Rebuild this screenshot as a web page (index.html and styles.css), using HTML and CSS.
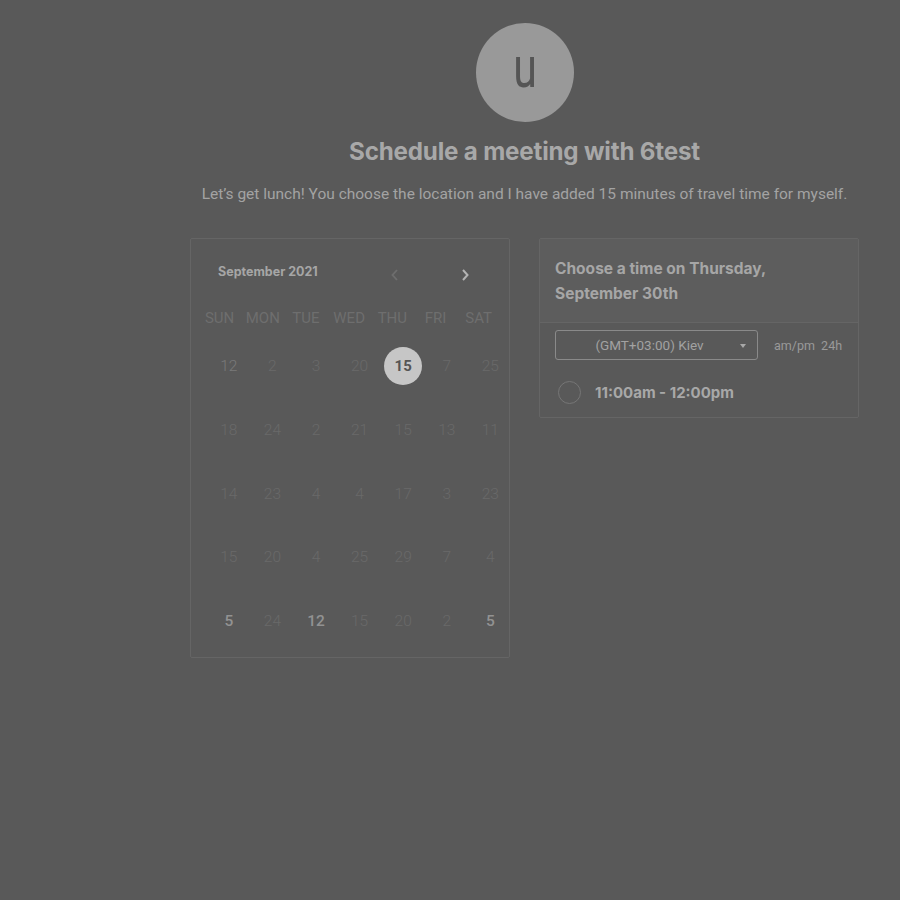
FILE: index.html
```html
<!DOCTYPE html>
<html>
<head>
<meta charset="utf-8">
<link rel="stylesheet" href="styles.css">
</head>
<body>
<div class="page">
  <div class="avatar"><span class="initial">u</span></div>
  <h1 class="title">Schedule a meeting with 6test</h1>
  <p class="subtitle">Let’s get lunch! You choose the location and I have added 15 minutes of travel time for myself.</p>
  <div class="cards">
    <div class="card cal">
      <div class="cal-head">
        <span class="month">September 2021</span>
        <span class="nav prev"><svg width="10" height="14" viewBox="0 0 10 14"><path d="M7 2 L2.5 7 L7 12" fill="none" stroke="#6e6e6e" stroke-width="1.8"/></svg></span>
        <span class="nav next"><svg width="10" height="14" viewBox="0 0 10 14"><path d="M3 2 L7.5 7 L3 12" fill="none" stroke="#b4b4b4" stroke-width="2"/></svg></span>
      </div>
      <div class="dow">
        <span>SUN</span><span>MON</span><span>TUE</span><span>WED</span><span>THU</span><span>FRI</span><span>SAT</span>
      </div>
      <div class="days">
        <span class="mid">12</span><span>2</span><span>3</span><span>20</span><span class="sel"><b>15</b></span><span>7</span><span>25</span>
        <span>18</span><span>24</span><span>2</span><span>21</span><span>15</span><span>13</span><span>11</span>
        <span>14</span><span>23</span><span>4</span><span>4</span><span>17</span><span>3</span><span>23</span>
        <span>15</span><span>20</span><span>4</span><span>25</span><span>29</span><span>7</span><span>4</span>
        <span class="on">5</span><span>24</span><span class="on">12</span><span>15</span><span>20</span><span>2</span><span class="on">5</span>
      </div>
    </div>
    <div class="card times">
      <div class="times-head">Choose a time on Thursday,<br>September 30th</div>
      <div class="times-body">
        <div class="tz-row">
          <div class="select"><span>(GMT+03:00) Kiev</span><i class="caret"></i></div>
          <div class="fmt">am/pm&nbsp;&nbsp;24h</div>
        </div>
        <div class="slot"><span class="radio"></span><span class="slot-text">11:00am - 12:00pm</span></div>
      </div>
    </div>
  </div>
</div>
</body>
</html>
```
FILE: styles.css
```css
html, body {
  margin: 0;
  padding: 0;
  background: #595959;
  height: 100%;
}
body {
  font-family: Roboto, "Liberation Sans", sans-serif;
}
.page {
  margin-left: 190px;
  width: 669px;
  display: flex;
  flex-direction: column;
  align-items: center;
  padding-top: 23px;
}
.avatar {
  width: 98px;
  height: 99px;
  border-radius: 50%;
  background: #999999;
  display: flex;
  align-items: center;
  justify-content: center;
}
.initial {
  color: #555555;
  font-family: Roboto, sans-serif;
  font-size: 58px;
  line-height: 1;
  display: block;
  transform: scaleX(0.74);
  margin-top: -12px;
}
.title {
  margin: 15px 0 0;
  font-family: Inter, sans-serif;
  font-weight: 700;
  font-size: 24.2px;
  line-height: 30px;
  color: #a8a8a8;
  letter-spacing: -0.2px;
}
.subtitle {
  margin: 17px 0 0;
  font-family: Roboto, sans-serif;
  font-size: 15.5px;
  line-height: 20px;
  color: #a3a3a3;
  white-space: nowrap;
}
.cards {
  margin-top: 34px;
  align-self: stretch;
  display: flex;
  gap: 29px;
  align-items: flex-start;
}
.card {
  width: 320px;
  box-sizing: border-box;
  border: 1px solid #656565;
  border-radius: 2px;
}
.cal {
  height: 420px;
}
.cal-head {
  display: flex;
  align-items: center;
  height: 30px;
  margin-top: 21px;
  padding-left: 27px;
}
.month {
  font-family: Inter, sans-serif;
  font-weight: 700;
  font-size: 12.5px;
  color: #a6a6a6;
  width: 171px;
  margin-top: -8px;
}
.nav {
  display: flex;
  align-items: center;
  justify-content: center;
  width: 12px;
  height: 16px;
}
.next { margin-left: 58px; }
.dow {
  display: grid;
  grid-template-columns: repeat(7, 43.2px);
  padding-left: 7px;
  margin-top: 18px;
  font-size: 15px;
  color: #6e6e6e;
  line-height: 20px;
}
.dow span { text-align: center; }
.days {
  display: grid;
  grid-template-columns: repeat(7, 43.6px);
  grid-auto-rows: 63.75px;
  padding-left: 16px;
  margin-top: 23px;
  font-size: 15.5px;
  color: #696969;
  font-weight: 300;
}
.days span {
  display: flex;
  justify-content: center;
  align-items: flex-start;
  line-height: 30px;
}
.days .mid { color: #7a7a7a; }
.days .on { color: #929292; font-weight: 500; }
.days .sel b {
  width: 38px;
  height: 38px;
  margin-top: -4px;
  border-radius: 50%;
  background: #c6c6c6;
  color: #555555;
  font-weight: 700;
  display: flex;
  align-items: center;
  justify-content: center;
  font-size: 15px;
}
.times-head {
  background: #5d5d5d;
  border-bottom: 1px solid #656565;
  padding: 17px 15px 16px;
  font-family: Inter, sans-serif;
  font-weight: 700;
  font-size: 15.5px;
  line-height: 25px;
  color: #a6a6a6;
}
.times-body {
  padding: 7px 15px 1px;
}
.tz-row {
  display: flex;
  align-items: center;
}
.select {
  width: 203px;
  height: 30px;
  box-sizing: border-box;
  border: 1px solid #8a8a8a;
  border-radius: 3px;
  display: flex;
  align-items: center;
  position: relative;
  font-size: 13.5px;
  color: #a2a2a2;
}
.select span {
  flex: 1;
  text-align: center;
  padding-right: 14px;
}
.caret {
  position: absolute;
  right: 11px;
  top: 13px;
  width: 0;
  height: 0;
  border-left: 3.5px solid transparent;
  border-right: 3.5px solid transparent;
  border-top: 4px solid #a8a8a8;
}
.fmt {
  margin-left: 16px;
  font-size: 12.5px;
  color: #9a9a9a;
}
.slot {
  display: flex;
  align-items: center;
  height: 48px;
  margin-top: 8px;
}
.radio {
  width: 23px;
  height: 23px;
  box-sizing: border-box;
  border: 1.5px solid #767676;
  border-radius: 50%;
  margin-left: 3px;
}
.slot-text {
  margin-left: 14px;
  font-family: Inter, sans-serif;
  font-weight: 700;
  font-size: 15px;
  color: #a8a8a8;
}
```
